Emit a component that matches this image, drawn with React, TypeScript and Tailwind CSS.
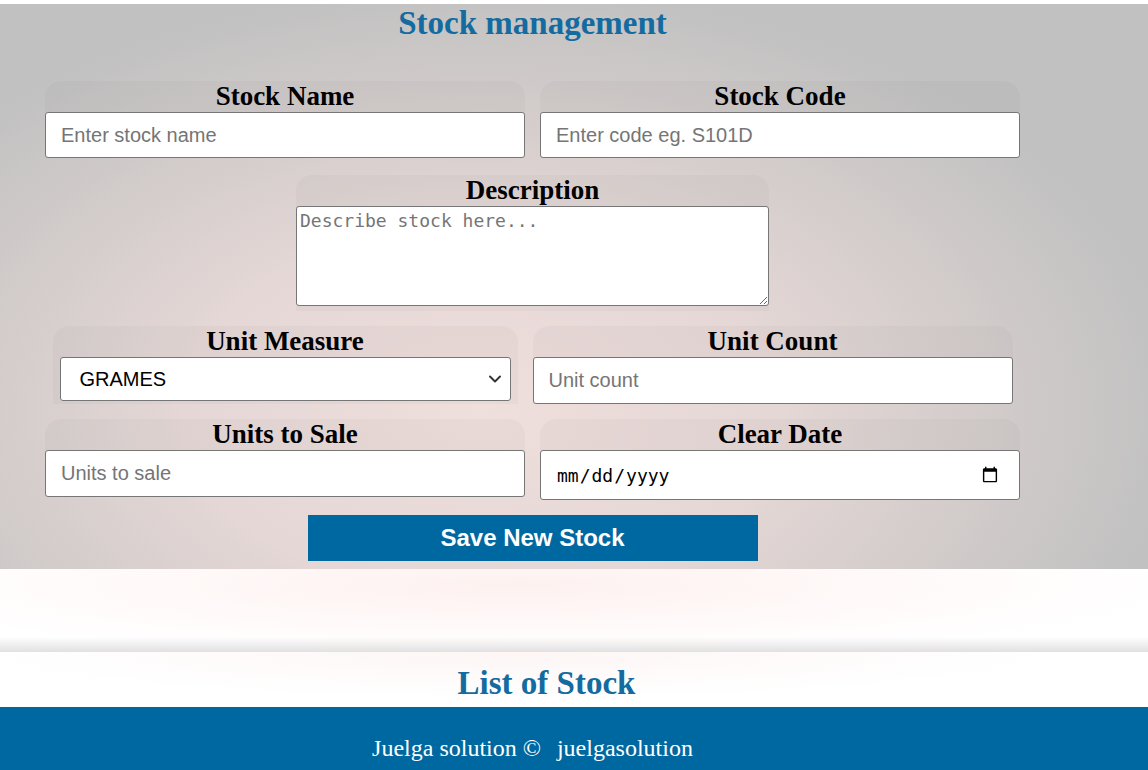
import { ChevronDown } from 'lucide-react';

const serif = 'font-["Liberation_Serif","Times_New_Roman",serif]';
const sans = 'font-["Liberation_Sans",Arial,sans-serif]';

function Label({ children }: { children: React.ReactNode }) {
  return (
    <div className={`${serif} h-[31px] text-center text-[27px] font-bold leading-[31px] text-black`}>{children}</div>
  );
}

const inputCls = `${sans} block w-full rounded-[3px] border border-[#767676] bg-white px-[15px] text-[20px] text-black placeholder:text-[#757575] outline-none`;

export default function App() {
  return (
    <div className="min-h-[770px] w-full bg-white pt-[4px]">
      <section className="h-[565px] w-full bg-[radial-gradient(ellipse_at_42%_72%,#efdfdd_0%,#e4d7d5_32%,#c1c1c1_74%)]">
        <div className="w-[1065px]">
          <h1 className={`${serif} text-center text-[33px] font-bold leading-[38px] text-[#136ba0]`}>Stock management</h1>

          <div className="mx-auto mt-[39px] grid w-[975px] grid-cols-2 gap-x-[15px]">
            <div className="rounded-t-[16px] bg-black/[0.025]">
              <Label>Stock Name</Label>
              <input className={`${inputCls} h-[46px]`} placeholder="Enter stock name" />
            </div>
            <div className="rounded-t-[16px] bg-black/[0.025]">
              <Label>Stock Code</Label>
              <input className={`${inputCls} h-[46px]`} placeholder="Enter code eg. S101D" />
            </div>
          </div>

          <div className="mx-auto mt-[17px] w-[473px] rounded-t-[16px] bg-black/[0.025] pb-[5px]">
            <Label>Description</Label>
            <textarea
              className={`block h-[100px] w-full resize-y rounded-[3px] border border-[#767676] bg-white px-[3px] pt-[3px] font-["DejaVu_Sans_Mono","Liberation_Mono",monospace] text-[18px] leading-[22px] text-black placeholder:text-[#757575] outline-none`}
              placeholder="Describe stock here..."
            />
          </div>

          <div className="mx-auto mt-[15px] flex w-[960px] gap-[15px]">
            <div className="w-[465px] rounded-t-[16px] bg-black/[0.025] px-[7px] pb-[2px]">
              <Label>Unit Measure</Label>
              <div className="relative">
                <select
                  className={`${sans} block h-[44px] w-full appearance-none rounded-[3px] border border-[#767676] bg-white pl-[19px] text-[20px] text-black outline-none`}
                  defaultValue="GRAMES"
                >
                  <option>GRAMES</option>
                  <option>KILOGRAMS</option>
                  <option>LITRES</option>
                </select>
                <ChevronDown size={20} strokeWidth={2.3} className="pointer-events-none absolute right-[6px] top-[12px] text-[#333]" />
              </div>
            </div>
            <div className="w-[480px] rounded-t-[16px] bg-black/[0.025]">
              <Label>Unit Count</Label>
              <input className={`${inputCls} h-[47px]`} placeholder="Unit count" />
            </div>
          </div>

          <div className="mx-auto mt-[15px] grid w-[975px] grid-cols-2 gap-x-[15px]">
            <div className="self-start rounded-t-[16px] bg-black/[0.025]">
              <Label>Units to Sale</Label>
              <input className={`${inputCls} h-[47px]`} placeholder="Units to sale" />
            </div>
            <div className="rounded-t-[16px] bg-black/[0.025]">
              <Label>Clear Date</Label>
              <input
                type="date"
                className={`block h-[50px] w-full rounded-[3px] border border-[#767676] bg-white pl-[15px] pr-[18px] font-["DejaVu_Sans_Mono","Liberation_Mono",monospace] text-[18px] text-black outline-none`}
              />
            </div>
          </div>

          <div className="mt-[15px] flex justify-center">
            <button className={`${sans} h-[46px] w-[450px] bg-[#0068a0] text-[24px] font-bold text-white`}>Save New Stock</button>
          </div>
        </div>
      </section>

      <div className="h-[83px] w-full bg-[radial-gradient(ellipse_at_45%_20%,#fdf1ef_0%,#fffafa_45%,#ffffff_75%)]">
        <div className="h-full w-full bg-[linear-gradient(to_bottom,transparent_82%,#e2e0e0_100%)]" />
      </div>

      <div className="h-[55px] w-full bg-[radial-gradient(ellipse_at_45%_0%,#fdf6f5_0%,#ffffff_60%)] pr-[55px]">
        <h2 className={`${serif} pt-[12px] text-center text-[33px] font-bold leading-[38px] text-[#136ba0]`}>List of Stock</h2>
      </div>

      <footer className="h-[63px] w-full bg-[#0068a0] pt-[27px]">
        <p className={`${serif} w-[1065px] text-center text-[24px] leading-[28px] text-white`}>
          Juelga solution ©<span className="ml-[16px]">juelgasolution</span>
        </p>
      </footer>
    </div>
  );
}
